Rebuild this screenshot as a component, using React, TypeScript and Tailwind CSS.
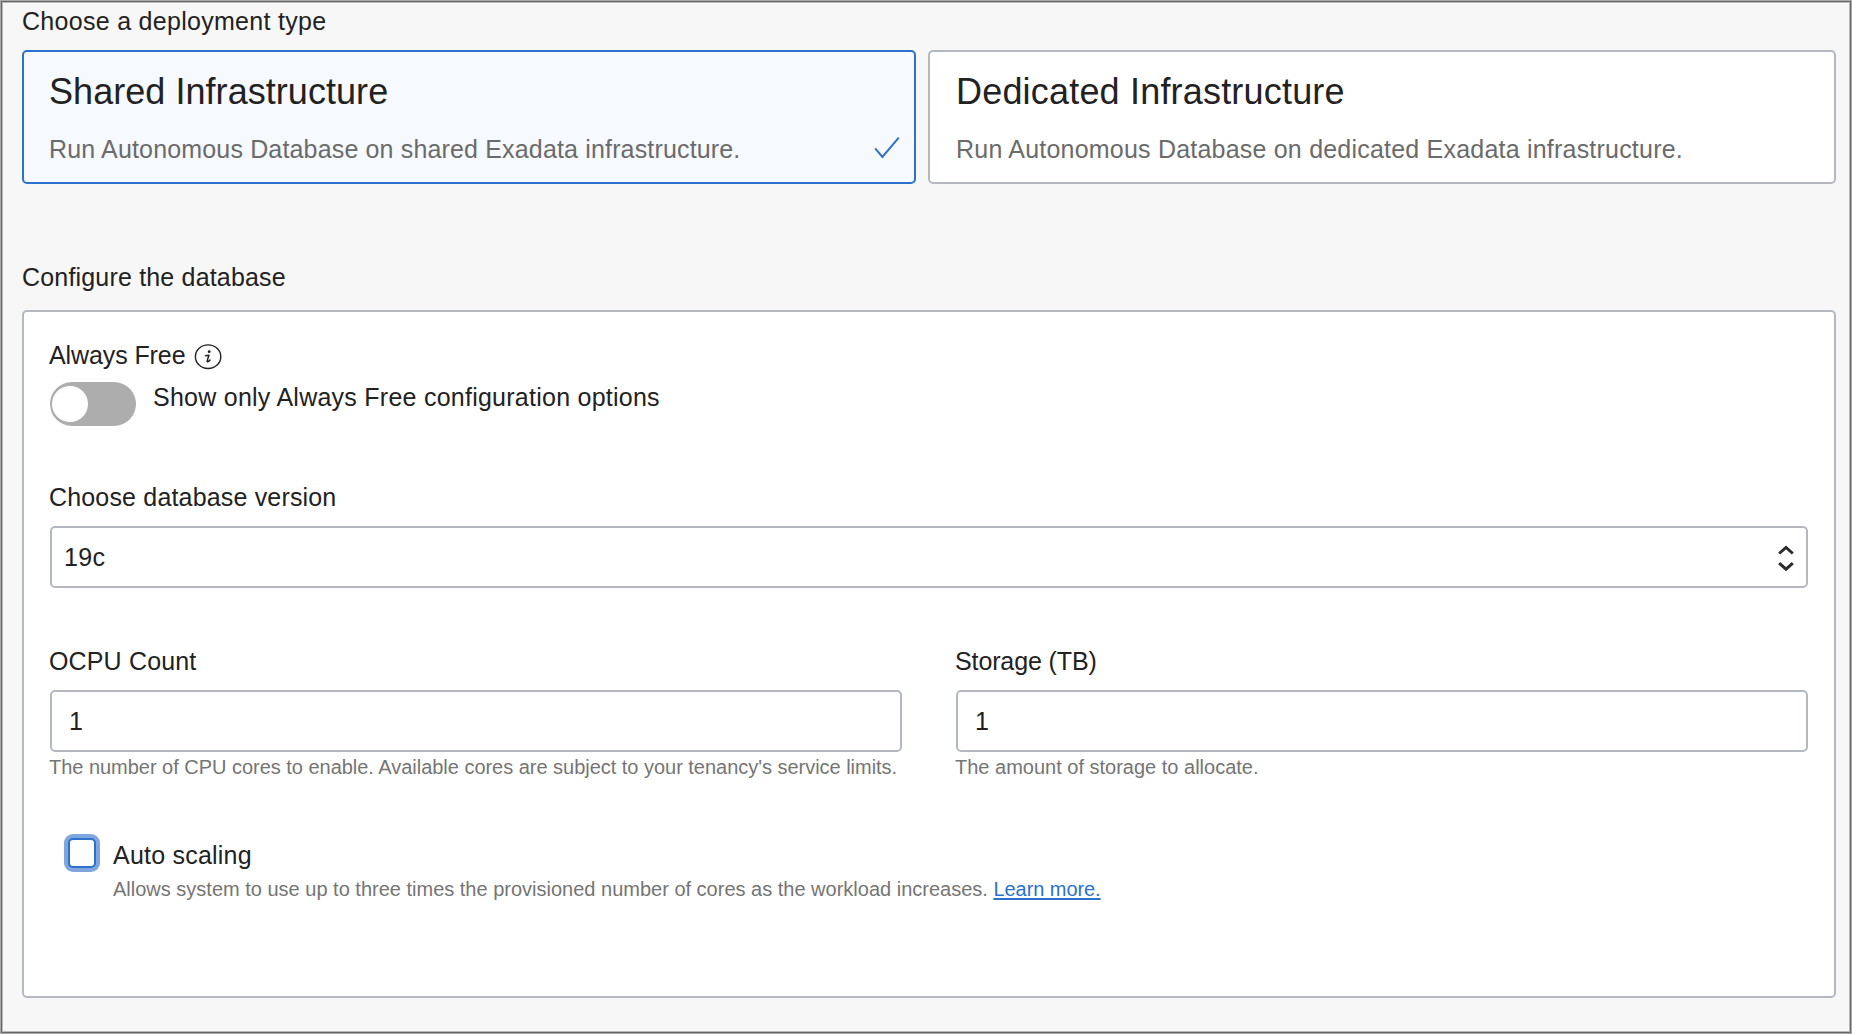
import type { ReactNode } from "react";

function DeploymentCard({
  title,
  description,
  selected = false,
  className,
}: {
  title: ReactNode;
  description: ReactNode;
  selected?: boolean;
  className: string;
}) {
  return (
    <button
      type="button"
      aria-pressed={selected}
      className={
        "relative flex h-[134px] flex-col rounded-[5px] border-2 pt-[19px] text-left " +
        (selected ? "border-[#2a72cc] bg-[#f6f9fe] " : "border-[#b5b9bf] bg-white ") +
        className
      }
    >
      <span className="h-[42px] whitespace-nowrap text-[36px] leading-[42px] text-[#222222]">{title}</span>
      <span className="mt-[21px] h-[30px] whitespace-nowrap text-[25px] leading-[30px] text-[#6b6b6b]">
        {description}
      </span>
      {selected && (
        <svg
          className="absolute bottom-[22px] right-[13px] h-[24px] w-[28px]"
          viewBox="0 0 28 24"
          fill="none"
          stroke="#2a72cc"
          strokeWidth="2"
        >
          <path d="M2.2 12.4 9.4 21 25.8 1.6" />
        </svg>
      )}
    </button>
  );
}

function NumberField({
  label,
  value,
  hint,
  className,
}: {
  label: ReactNode;
  value: string;
  hint: ReactNode;
  className: string;
}) {
  return (
    <div className={"flex flex-col " + className}>
      <label className="-ml-px h-[30px] whitespace-nowrap text-[25px] leading-[30px]">{label}</label>
      <div className="mt-[14px] flex h-[62px] items-start rounded-[5px] border-2 border-[#b5b9bf] bg-white pl-[17px] pt-[14px] text-[25px] leading-[30px]">
        {value}
      </div>
      <p className="-ml-px mt-[3px] h-[24px] whitespace-nowrap text-[20px] leading-[24px] text-[#757575]">{hint}</p>
    </div>
  );
}

export default function App() {
  return (
    <main className="h-[1034px] w-[1852px] overflow-hidden border border-[#a8a9a8] bg-[#f7f7f7] font-['Liberation_Sans',Arial,sans-serif] text-[#222222]">
      <div className="flex h-full flex-col border border-[#666766] pl-[20px] pr-[14px] pt-[4px] shadow-[inset_0_0_0_1px_#b8b9b8]">
        <h2 className="h-[30px] text-[25px] leading-[30px] tracking-[0.29px]">Choose a deployment type</h2>

        <div className="mt-[14px] flex justify-between">
          <DeploymentCard
            className="w-[894px] pl-[25px]"
            selected
            title={<span className="tracking-[0.05px]">Shared Infrastructure</span>}
            description={
              <span className="tracking-[0.16px]">Run Autonomous Database on shared Exadata infrastructure.</span>
            }
          />
          <DeploymentCard
            className="w-[908px] pl-[26px]"
            title={<span className="tracking-[0.19px]">Dedicated Infrastructure</span>}
            description={
              <span className="tracking-[0.21px]">Run Autonomous Database on dedicated Exadata infrastructure.</span>
            }
          />
        </div>

        <h2 className="mt-[78px] h-[30px] text-[25px] leading-[30px] tracking-[0.18px]">Configure the database</h2>

        <section className="mt-[18px] flex h-[688px] flex-col rounded-[5px] border-2 border-[#b5b9bf] bg-white px-[26px] pt-[28px]">
          <div className="-ml-px flex h-[30px] items-start">
            <span className="whitespace-nowrap text-[25px] leading-[30px] tracking-[-0.1px]">Always Free</span>
            <svg className="ml-[9px] mt-[3px] h-[27px] w-[29px] shrink-0" viewBox="0 0 29 27" fill="none">
              <ellipse cx="14.1" cy="13.7" rx="12.7" ry="11.8" stroke="#222222" strokeWidth="1.4" />
              <circle cx="15.2" cy="8.7" r="1.4" fill="#222222" />
              <path
                d="M11.6 12.7 14.900 12.200 13.100 18.100c-.2.900.7 1 2.900-1"
                stroke="#222222"
                strokeWidth="1.5"
                strokeLinecap="round"
                strokeLinejoin="round"
              />
            </svg>
          </div>

          <div className="mt-[12px] flex h-[44px] items-start">
            <button
              type="button"
              role="switch"
              aria-checked="false"
              className="flex h-[44px] w-[86px] shrink-0 items-center rounded-full bg-[#adadad] pl-[2px]"
            >
              <span className="size-[36px] rounded-full bg-white" />
            </button>
            <span className="ml-[17px] whitespace-nowrap text-[25px] leading-[30px] tracking-[0.25px]">
              Show only Always Free configuration options
            </span>
          </div>

          <label className="-ml-px mt-[56px] h-[30px] text-[25px] leading-[30px] tracking-[0.17px]">
            Choose database version
          </label>
          <div className="mt-[14px] flex h-[62px] shrink-0 items-start justify-between rounded-[5px] border-2 border-[#b5b9bf] bg-white pl-[12px] pr-[12px] pt-[14px]">
            <span className="text-[25px] leading-[30px] tracking-[0.3px]">19c</span>
            <svg className="mt-[2px] h-[28px] w-[16px]" viewBox="0 0 16 28" fill="none" stroke="#2b2b2b" strokeWidth="3">
              <path d="M1.200 9.500 8 3.500l6.800 6M1.200 19.200l6.800 6 6.800-6" />
            </svg>
          </div>

          <div className="mt-[58px] flex justify-between">
            <NumberField
              className="w-[852px]"
              label={<span className="tracking-[0.15px]">OCPU Count</span>}
              value="1"
              hint={
                <span className="tracking-[-0.025px]">
                  The number of CPU cores to enable. Available cores are subject to your tenancy's service limits.
                </span>
              }
            />
            <NumberField
              className="w-[852px]"
              label={<span className="tracking-[-0.12px]">Storage (TB)</span>}
              value="1"
              hint="The amount of storage to allocate."
            />
          </div>

          <div className="mt-[55px] flex items-start pl-[18px]">
            <span
              role="checkbox"
              aria-checked="false"
              className="mt-[4px] h-[30px] w-[28px] shrink-0 rounded-[5px] border-2 border-[#2a72cc] bg-white ring-4 ring-[#7fa6de]"
            />
            <div className="ml-[17px] flex flex-col">
              <span className="mt-[6px] h-[30px] text-[25px] leading-[30px] tracking-[0.22px]">Auto scaling</span>
              <p className="mt-[7px] h-[24px] whitespace-nowrap text-[20px] leading-[24px] text-[#757575]">
                Allows system to use up to three times the provisioned number of cores as the workload increases.{" "}
                <a
                  href="#"
                  className="tracking-[-0.06px] text-[#2a72cc] underline decoration-2 underline-offset-[2px]"
                >
                  Learn more.
                </a>
              </p>
            </div>
          </div>
        </section>
      </div>
    </main>
  );
}
